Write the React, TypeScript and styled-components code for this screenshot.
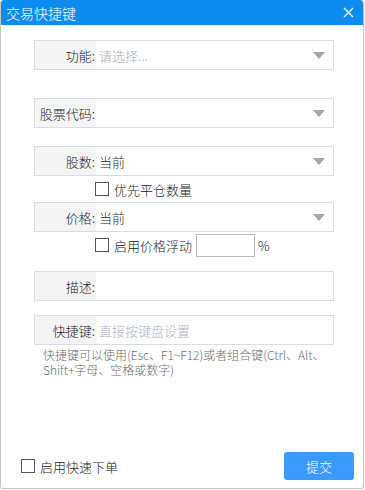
import React from "react";
import styled, { createGlobalStyle } from "styled-components";

const Global = createGlobalStyle`
  html, body { margin: 0; padding: 0; background: #ffffff; }
  body { font-family: "Noto Sans CJK SC", "Noto Sans", sans-serif; font-weight: 300; }
  * { box-sizing: border-box; }
`;

const Dialog = styled.div`
  width: 364px;
  height: 489px;
  border: 1px solid #c4c4c4;
  border-top: none;
  border-radius: 4px 4px 3px 3px;
  overflow: hidden;
  display: flex;
  flex-direction: column;
  background: #fff;
`;

const TitleBar = styled.div`
  height: 25px;
  background: #0b8cee;
  color: #fff;
  display: flex;
  align-items: center;
  justify-content: space-between;
  padding: 0 9px 0 5px;
  font-size: 14px;
  flex: none;
`;

const CloseBtn = styled.div`
  width: 12px;
  height: 12px;
  display: flex;
  align-items: center;
  justify-content: center;
`;

const Body = styled.div`
  flex: 1;
  display: flex;
  flex-direction: column;
  padding: 15px 0 0 33px;
`;

const Field = styled.div<{ $mt?: number }>`
  width: 300px;
  height: 30px;
  border: 1px solid #d8dde5;
  display: flex;
  align-items: center;
  margin-top: ${(p) => p.$mt ?? 0}px;
  font-size: 13px;
`;

const Label = styled.div`
  width: 61px;
  height: 100%;
  background: #f4f4f5;
  display: flex;
  align-items: center;
  justify-content: flex-end;
  color: #222;
  padding-right: 1px;
  flex: none;
`;

const Value = styled.div<{ $placeholder?: boolean; $tone?: string }>`
  flex: 1;
  padding-left: 3px;
  color: ${(p) => (p.$placeholder ? p.$tone ?? "#aaaaaa" : "#222")};
`;

const Arrow = styled.div`
  width: 0;
  height: 0;
  border-left: 6px solid transparent;
  border-right: 6px solid transparent;
  border-top: 7px solid #a6a6aa;
  margin-right: 8px;
`;

const CheckRow = styled.div<{ $mt?: number; $ml?: number }>`
  display: flex;
  align-items: center;
  margin-top: ${(p) => p.$mt ?? 0}px;
  margin-left: ${(p) => p.$ml ?? 0}px;
  height: 22px;
  font-size: 13px;
  color: #222;
`;

const Box = styled.span`
  width: 14px;
  height: 14px;
  border: 1px solid #555;
  margin-right: 5px;
  flex: none;
`;

const SmallInput = styled.div`
  width: 59px;
  height: 23px;
  border: 1px solid #bbb;
  margin: 0 3px 0 4px;
`;

const Help = styled.div`
  margin: 2px 0 0 9px;
  width: 290px;
  font-size: 12px;
  line-height: 15px;
  color: #6d6d6d;
`;

const Footer = styled.div`
  margin-top: auto;
  display: flex;
  align-items: center;
  justify-content: space-between;
  padding: 0 9px 8px 20px;
`;

const Submit = styled.button`
  width: 70px;
  height: 28px;
  border: none;
  border-radius: 3px;
  background: #3a9bfc;
  color: #fff;
  font-family: inherit;
  font-weight: 300;
  font-size: 13px;
`;

export default function App() {
  return (
    <>
      <Global />
      <Dialog>
        <TitleBar>
          <span>交易快捷键</span>
          <CloseBtn>
            <svg width="11" height="11" viewBox="0 0 11 11">
              <path d="M1 1L10 10M10 1L1 10" stroke="#fff" strokeWidth="1.4" />
            </svg>
          </CloseBtn>
        </TitleBar>
        <Body>
          <Field>
            <Label>功能:</Label>
            <Value $placeholder>请选择...</Value>
            <Arrow />
          </Field>
          <Field $mt={28}>
            <Label>股票代码:</Label>
            <Value />
            <Arrow />
          </Field>
          <Field $mt={18}>
            <Label>股数:</Label>
            <Value>当前</Value>
            <Arrow />
          </Field>
          <CheckRow $mt={2} $ml={61}>
            <Box />
            优先平仓数量
          </CheckRow>
          <Field $mt={2}>
            <Label>价格:</Label>
            <Value>当前</Value>
            <Arrow />
          </Field>
          <CheckRow $mt={2} $ml={61}>
            <Box />
            启用价格浮动
            <SmallInput />%
          </CheckRow>
          <Field $mt={15}>
            <Label>描述:</Label>
            <Value />
          </Field>
          <Field $mt={14}>
            <Label>快捷键:</Label>
            <Value $placeholder $tone="#a9b2c2">直接按键盘设置</Value>
          </Field>
          <Help>
            快捷键可以使用(Esc、F1~F12)或者组合键(Ctrl、Alt、Shift+字母、空格或数字)
          </Help>
        </Body>
        <Footer>
          <CheckRow>
            <Box />
            启用快速下单
          </CheckRow>
          <Submit>提交</Submit>
        </Footer>
      </Dialog>
    </>
  );
}
